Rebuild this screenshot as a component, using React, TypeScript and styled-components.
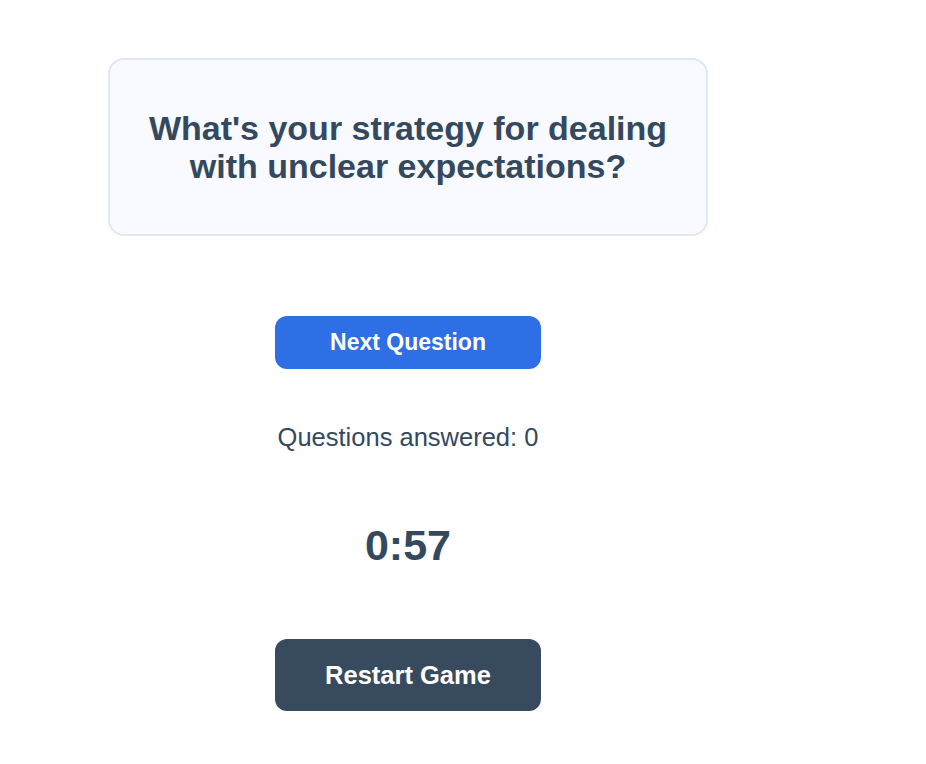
import React, { useState } from "react";
import styled, { createGlobalStyle } from "styled-components";

const GlobalStyle = createGlobalStyle`
  body {
    margin: 0;
    background: #ffffff;
    font-family: "Liberation Sans", Arial, sans-serif;
  }
`;

export default function App() {
  const [answered, setAnswered] = useState(0);
  return (
    <>
      <GlobalStyle />
      <Page>
        <Card>
          <Question>What's your strategy for dealing with unclear expectations?</Question>
        </Card>
        <Button $variant="primary" onClick={() => setAnswered(answered + 1)}>
          Next Question
        </Button>
        <Counter>Questions answered: {answered}</Counter>
        <Timer>0:57</Timer>
        <Button $variant="dark" onClick={() => setAnswered(0)}>
          Restart Game
        </Button>
      </Page>
    </>
  );
}

const Page = styled.main`
  width: 600px;
  margin-left: 108px;
  padding-top: 58px;
  display: flex;
  flex-direction: column;
  align-items: center;
`;

const Card = styled.section`
  box-sizing: border-box;
  width: 600px;
  height: 178px;
  display: flex;
  align-items: center;
  justify-content: center;
  background: #f8faff;
  border: 2px solid #e2e8f0;
  border-radius: 16px;
  padding: 0 30px;
`;

const Question = styled.h2`
  margin: 0;
  font-size: 34px;
  line-height: 38px;
  font-weight: 700;
  color: #34495e;
  text-align: center;
`;

const Button = styled.button<{ $variant: "primary" | "dark" }>`
  width: 266px;
  height: ${(p) => (p.$variant === "primary" ? "53px" : "72px")};
  margin-top: ${(p) => (p.$variant === "primary" ? "80px" : "71px")};
  border: none;
  border-radius: 12px;
  background: ${(p) => (p.$variant === "primary" ? "#2f6fe6" : "#374a5e")};
  color: #ffffff;
  font-family: "Liberation Sans", Arial, sans-serif;
  font-size: ${(p) => (p.$variant === "primary" ? "23px" : "25.5px")};
  font-weight: 700;
  cursor: pointer;
`;

const Counter = styled.p`
  margin: 55px 0 0;
  font-size: 25.5px;
  line-height: 26px;
  color: #34495e;
`;

const Timer = styled.div`
  margin-top: 72px;
  font-size: 43px;
  line-height: 46px;
  font-weight: 700;
  color: #34495e;
`;
